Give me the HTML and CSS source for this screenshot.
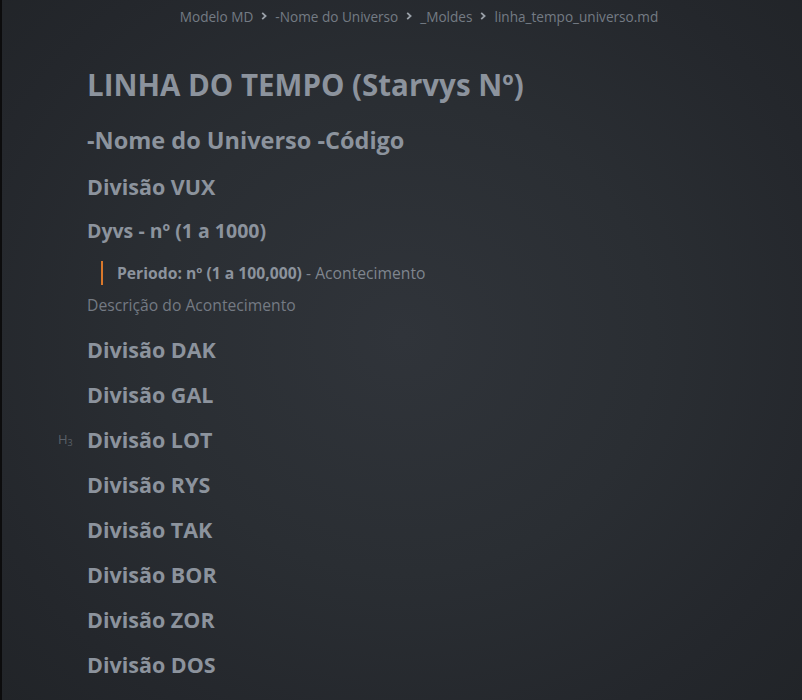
FILE: index.html
```html
<!DOCTYPE html>
<html lang="pt">
<head>
<meta charset="utf-8">
<title>linha_tempo_universo.md</title>
<link rel="stylesheet" href="styles.css">
</head>
<body>
<div class="pane">
  <nav class="crumbs">
    <span>Modelo MD</span>
    <svg class="chev" viewBox="0 0 8 10" width="8" height="10"><path d="M2.2 1.8 L5.6 5 L2.2 8.2" fill="none" stroke="currentColor" stroke-width="1.8"/></svg>
    <span>-Nome do Universo</span>
    <svg class="chev" viewBox="0 0 8 10" width="8" height="10"><path d="M2.2 1.8 L5.6 5 L2.2 8.2" fill="none" stroke="currentColor" stroke-width="1.8"/></svg>
    <span>_Moldes</span>
    <svg class="chev" viewBox="0 0 8 10" width="8" height="10"><path d="M2.2 1.8 L5.6 5 L2.2 8.2" fill="none" stroke="currentColor" stroke-width="1.8"/></svg>
    <span>linha_tempo_universo.md</span>
  </nav>
  <main class="doc">
    <h1 class="h1">LINHA DO TEMPO (Starvys Nº)</h1>
    <h2 class="h2">-Nome do Universo -Código</h2>
    <h3 class="h3 first">Divisão VUX</h3>
    <h4 class="h4">Dyvs - nº (1 a 1000)</h4>
    <blockquote class="quote"><strong>Periodo: nº (1 a 100,000)</strong> - Acontecimento</blockquote>
    <p class="desc">Descrição do Acontecimento</p>
    <div class="divs">
      <h3 class="h3">Divisão DAK</h3>
      <h3 class="h3">Divisão GAL</h3>
      <h3 class="h3 marked"><span class="hmark">H<sub>3</sub></span>Divisão LOT</h3>
      <h3 class="h3">Divisão RYS</h3>
      <h3 class="h3">Divisão TAK</h3>
      <h3 class="h3">Divisão BOR</h3>
      <h3 class="h3">Divisão ZOR</h3>
      <h3 class="h3">Divisão DOS</h3>
    </div>
  </main>
</div>
</body>
</html>
```

FILE: styles.css
```css
html, body {
  margin: 0;
  height: 100%;
}
body {
  background: #0c0c0d;
  font-family: "Open Sans", "Noto Sans", sans-serif;
  overflow: hidden;
}
.pane {
  margin-left: 2px;
  height: 700px;
  background: radial-gradient(ellipse 70% 75% at 50% 48%, #30343a 0%, #2a2e33 45%, #24272c 80%, #212428 100%);
}
.crumbs {
  height: 32px;
  display: flex;
  align-items: center;
  justify-content: center;
  gap: 6px;
  padding-left: 34px;
  font-size: 13.6px;
  color: #747b84;
}
.chev {
  color: #9aa0a8;
  margin: 0 1px;
}
.doc {
  padding-left: 85px;
  color: #8c939d;
}
.h1, .h2, .h3, .h4 {
  margin: 0;
  font-weight: 700;
  color: #8c939d;
}
.h1 {
  font-size: 29.5px;
  line-height: 44px;
  margin-top: 31px;
}
.h2 {
  font-size: 23.5px;
  line-height: 40px;
  margin-top: 13px;
}
.h3 {
  font-size: 21.5px;
  line-height: 45px;
  position: relative;
}
.h3.first {
  line-height: 40px;
  margin-top: 7px;
}
.h4 {
  font-size: 19.5px;
  line-height: 36px;
  margin-top: 6px;
}
.quote {
  margin: 12px 0 0 14px;
  padding-left: 14px;
  border-left: 2px solid #d9782b;
  font-size: 15.7px;
  line-height: 24px;
  color: #7f858e;
}
.quote strong {
  color: #8c939d;
}
.desc {
  margin: 8px 0 0;
  font-size: 15.7px;
  line-height: 24px;
  color: #747a83;
}
.divs {
  margin-top: 10px;
}
.hmark {
  position: absolute;
  left: -29px;
  top: 0;
  font-size: 13px;
  font-weight: 400;
  color: #5a6068;
  line-height: 45px;
}
.hmark sub {
  font-size: 9px;
  vertical-align: -2px;
}
```
